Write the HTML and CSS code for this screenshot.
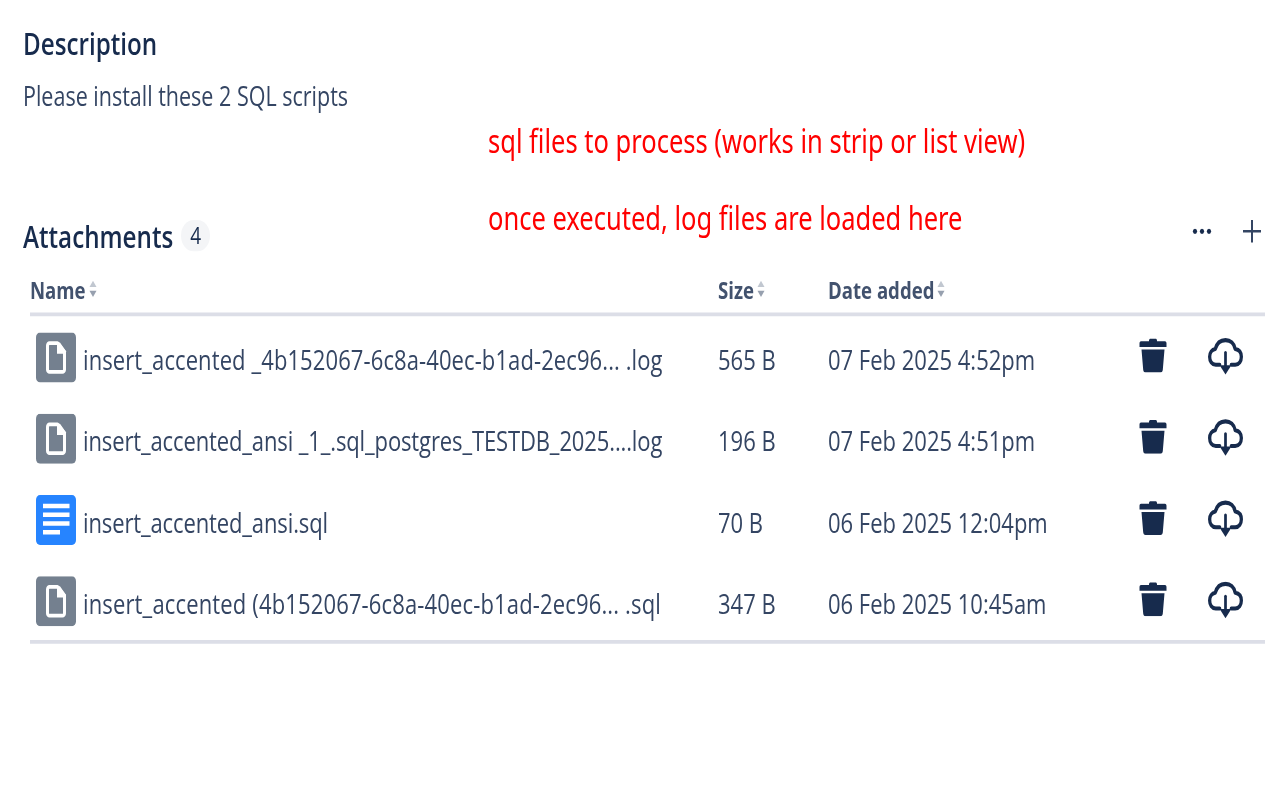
FILE: index.html
```html
<!DOCTYPE html>
<html lang="en">
<head>
<meta charset="utf-8">
<title>Attachments</title>
<link rel="stylesheet" href="styles.css">
</head>
<body>
<svg class="defs" width="0" height="0" aria-hidden="true">
  <symbol id="trash" viewBox="0 0 28 28">
    <path fill="#172b4d" d="M10 2.5c0-1 .8-1.5 1.5-1.5h5c.8 0 1.500.5 1.500 1.500V3h8c.8 0 1.500.7 1.500 1.500V7.500H.5V4.500C.5 3.700 1.200 3 2 3h8z"/>
    <path fill="#172b4d" d="M2.500 9.500h23l-1.700 16.300c-.1 1.200-1 2.200-2.300 2.200h-15c-1.300 0-2.200-1-2.300-2.200z"/>
  </symbol>
  <symbol id="cloud" viewBox="0 0 36 30">
    <path fill="none" stroke="#172b4d" stroke-width="3.400" stroke-linecap="round" stroke-linejoin="round" d="M12 22H8C4 22 1.700 19 1.700 15.500 1.700 12 4 9.500 7.500 9 9 4.500 13 1.700 18 1.700 23 1.700 27 4.500 28 9c4 .5 6.300 3 6.300 6.500C34.300 19 32 22 28 22h-4"/>
    <path fill="none" stroke="#172b4d" stroke-width="2.800" stroke-linecap="round" d="M18 12v12"/>
    <path fill="#172b4d" d="M12 22.500h12L18 30z"/>
  </symbol>
  <symbol id="file" viewBox="0 0 40 40">
    <rect width="40" height="40" rx="4" fill="#74808f"/>
    <path fill="none" stroke="#fff" stroke-width="3" stroke-linejoin="round" d="M11.500 10.500a2 2 0 0 1 2-2h8l7 7v14a2 2 0 0 1-2 2h-13a2 2 0 0 1-2-2z"/>
    <path fill="#fff" d="M21 8h3l6 7v2h-9z"/>
  </symbol>
  <symbol id="doc" viewBox="0 0 40 40">
    <rect width="40" height="40" rx="4" fill="#2684ff"/>
    <path fill="#fff" d="M7 7h26.500v3.500H7zM7 14h26.500v3.500H7zM7 21h26.500v3.500H7zM7 28h17v3.500H7z"/>
  </symbol>
  <symbol id="sort" viewBox="0 0 8 14">
    <path fill="#c1c7d0" d="M4 .5l3.500 5H.5z"/>
    <path fill="#97a0af" d="M4 13.500L.5 8.500h7z"/>
  </symbol>
</svg>

<main class="stage">
  <section class="description">
    <h2 class="heading">Description</h2>
    <p class="desc-text">Please install these 2 SQL scripts</p>
  </section>

  <section class="attachments">
    <header class="att-head">
      <h2 class="heading">Attachments</h2>
      <span class="count">4</span>
      <span class="att-actions">
        <svg class="more" viewBox="0 0 20 6" aria-hidden="true"><circle cx="3" cy="3" r="2.100"/><circle cx="10" cy="3" r="2.100"/><circle cx="17" cy="3" r="2.100"/></svg>
        <svg class="plus" viewBox="0 0 20 20" aria-hidden="true"><path d="M10 1v18M1 10h18"/></svg>
      </span>
    </header>

    <div class="table">
      <div class="row-head">
        <span class="th">Name <svg class="sort"><use href="#sort"/></svg></span>
        <span class="th">Size <svg class="sort"><use href="#sort"/></svg></span>
        <span class="th">Date added <svg class="sort"><use href="#sort"/></svg></span>
      </div>
      <div class="rows">
        <div class="row">
          <span class="name"><svg class="type"><use href="#file"/></svg>insert_accented _4b152067-6c8a-40ec-b1ad-2ec96... .log</span>
          <span class="cell">565 B</span>
          <span class="cell">07 Feb 2025 4:52pm</span>
          <svg class="trash"><use href="#trash"/></svg>
          <svg class="cloud"><use href="#cloud"/></svg>
        </div>
        <div class="row">
          <span class="name name-tight"><svg class="type"><use href="#file"/></svg>insert_accented_ansi _1_.sql_postgres_TESTDB_2025....log</span>
          <span class="cell">196 B</span>
          <span class="cell">07 Feb 2025 4:51pm</span>
          <svg class="trash"><use href="#trash"/></svg>
          <svg class="cloud"><use href="#cloud"/></svg>
        </div>
        <div class="row">
          <span class="name name-tight"><svg class="type"><use href="#doc"/></svg>insert_accented_ansi.sql</span>
          <span class="cell">70 B</span>
          <span class="cell">06 Feb 2025 12:04pm</span>
          <svg class="trash"><use href="#trash"/></svg>
          <svg class="cloud"><use href="#cloud"/></svg>
        </div>
        <div class="row">
          <span class="name name-wide"><svg class="type"><use href="#file"/></svg>insert_accented (4b152067-6c8a-40ec-b1ad-2ec96... .sql</span>
          <span class="cell">347 B</span>
          <span class="cell">06 Feb 2025 10:45am</span>
          <svg class="trash"><use href="#trash"/></svg>
          <svg class="cloud"><use href="#cloud"/></svg>
        </div>
      </div>
    </div>
  </section>

  <p class="note note-a">sql files to process (works in strip or list view)</p>
  <p class="note note-b">once executed, log files are loaded here</p>
</main>
</body>
</html>
```

FILE: styles.css
```css
html, body {
  margin: 0;
  height: 100%;
  background: #fff;
  overflow: hidden;
}

.defs {
  position: absolute;
}

.stage {
  position: relative;
  width: 1280px;
  height: 640px;
  box-sizing: border-box;
  padding: 23px 15px 0 23px;
  transform: scaleY(1.25);
  transform-origin: 0 0;
  filter: blur(0.4px);
  font-family: "Open Sans", "Noto Sans", sans-serif;
  font-size: 22px;
  letter-spacing: 0;
  color: #344563;
}

.heading {
  margin: 0;
  font-size: 24.2px;
  font-weight: 600;
  letter-spacing: 0;
  line-height: 24px;
  color: #172b4d;
}

.desc-text {
  margin: 18px 0 0;
  font-size: 21.5px;
  line-height: 24px;
}

.attachments {
  margin-top: 87.8px;
}

.att-head {
  display: flex;
  align-items: center;
  height: 24px;
  gap: 8px;
}

.count {
  width: 29px;
  height: 25px;
  border-radius: 12.5px;
  background: #f4f5f7;
  color: #172b4d;
  font-size: 19px;
  line-height: 25px;
  text-align: center;
}

.att-actions {
  margin-left: auto;
  display: flex;
  align-items: center;
  gap: 30px;
  margin-right: 3px;
  margin-bottom: 8px;
}

.more {
  width: 20px;
  height: 6px;
  fill: #172b4d;
}

.plus {
  width: 20px;
  height: 20px;
  fill: none;
  stroke: #344563;
  stroke-width: 2;
}

.table {
  margin: 17.8px 0 0 7px;
}

.row-head,
.row {
  display: grid;
  grid-template-columns: 688px 110px 311px 69px 1fr;
  align-items: center;
}

.row-head {
  height: 34.2px;
  padding-bottom: 7.200px;
  box-sizing: border-box;
  border-bottom: 3px solid #dcdee7;
}

.th {
  display: flex;
  align-items: center;
  gap: 3px;
  font-size: 18.6px;
  font-weight: 700;
  color: #42526e;
}

.sort {
  width: 8px;
  height: 14px;
}

.rows {
  padding-top: 3.800px;
  border-bottom: 3px solid #dcdee7;
}

.row {
  height: 65px;
}

.row:last-child {
  margin-bottom: -4.600px;
}

.cell {
  padding-bottom: 4.800px;
}

.name {
  display: flex;
  align-items: center;
  gap: 7px;
  padding-left: 6px;
  padding-bottom: 4.800px;
  letter-spacing: 0.1px;
  white-space: nowrap;
}

.name-tight {
  letter-spacing: -0.12px;
}

.name-wide {
  letter-spacing: 0.15px;
}

.type {
  flex: none;
  width: 40px;
  height: 40px;
  margin-bottom: 0.800px;
}

.trash {
  width: 28px;
  height: 28px;
  margin-bottom: 10px;
}

.cloud {
  width: 35px;
  height: 30px;
  margin-bottom: 7.500px;
}

.note {
  position: absolute;
  left: 488px;
  margin: 0;
  color: #ff0000;
  font-size: 25.5px;
  line-height: 24px;
  font-family: "Noto Sans", sans-serif;
  white-space: nowrap;
}

.note-a {
  top: 99.5px;
}

.note-b {
  top: 162px;
}
```
